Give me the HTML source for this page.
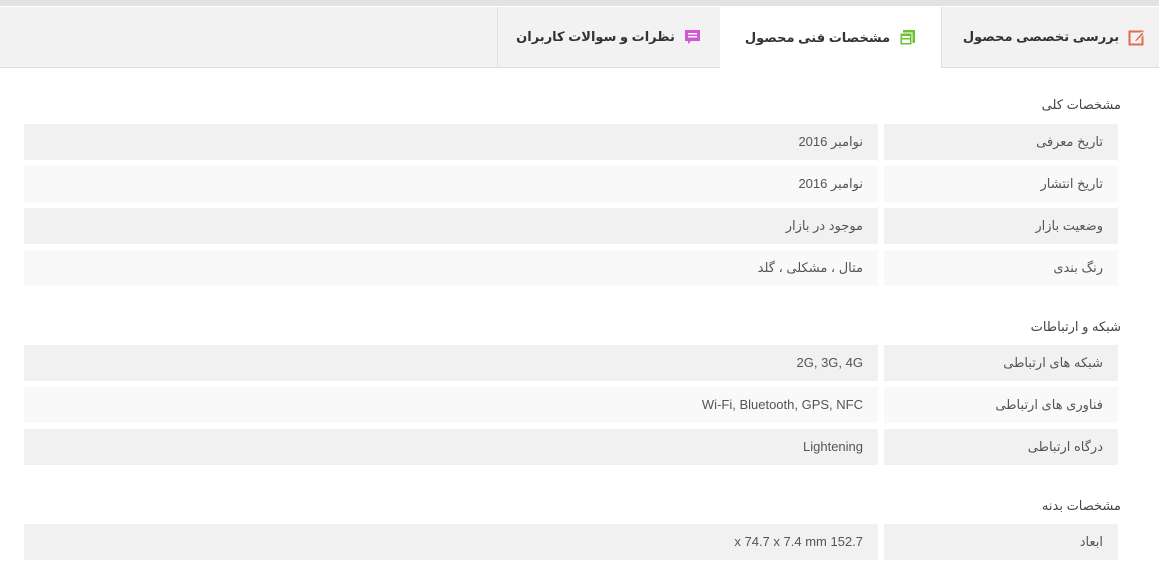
<!DOCTYPE html>
<html dir="rtl"><head><meta charset="utf-8"><style>
*{margin:0;padding:0;box-sizing:border-box}
body{width:1159px;height:562px;background:#fff;font-family:"Liberation Sans","DejaVu Sans",sans-serif;color:#444;position:relative;overflow:hidden}
.topbar{position:absolute;left:0;top:0;width:1159px;height:6px;background:#e2e2e2}
.tabs{position:absolute;left:0;top:7px;width:1159px;height:61px;background:#f2f2f2;border-bottom:1px solid #ddd}
.tab{position:absolute;top:0;height:60px;font-size:13px;font-weight:bold;color:#333;display:flex;align-items:center;justify-content:center;gap:9px;direction:rtl}
.sep{position:absolute;top:0;width:1px;height:60px;background:#e0e0e0}
.h{position:absolute;right:38px;font-size:13px;color:#444}
.l{position:absolute;left:884px;width:234px;height:36px;font-size:13px;line-height:36px;padding-right:15px;color:#555}
.v{position:absolute;left:24px;width:854px;height:36px;font-size:13px;line-height:36px;padding-right:15px;color:#555}
.d{background:#f1f1f1}.w{background:#f9f9f9}
</style></head><body>
<div class="topbar"></div>
<div class="tabs">
<div class="tab" style="left:941px;width:218px;padding-left:8px"><svg width="17" height="17" viewBox="0 0 17 17"><rect x="1.5" y="2.5" width="13" height="13" fill="none" stroke="#e36a4c" stroke-width="2"/><path d="M7 11 L14 3 L16 5 L9 12 L6.5 12.5Z" fill="#e36a4c" stroke="#fff" stroke-width="0.8"/></svg><span>بررسی تخصصی محصول</span></div>
<div class="tab" style="left:720px;width:221px;background:#fff;height:61px"><svg width="17" height="17" viewBox="0 0 17 17"><rect x="4" y="1" width="12" height="13" fill="#6ac32a"/><rect x="1" y="4" width="12" height="12" fill="#6ac32a" stroke="#fff" stroke-width="1"/><rect x="3" y="7" width="8" height="7" fill="#fff"/><rect x="3" y="9" width="8" height="1.5" fill="#6ac32a"/></svg><span>مشخصات فنی محصول</span></div>
<div class="tab" style="left:497px;width:223px"><svg width="17" height="17" viewBox="0 0 17 17"><path d="M1 1H16V12H7L4 15V12H1Z" fill="#d455d8"/><rect x="4" y="4" width="9" height="1.5" fill="#fff"/><rect x="4" y="7" width="9" height="1.5" fill="#fff"/></svg><span>نظرات و سوالات کاربران</span></div>
<div class="sep" style="left:497px"></div><div class="sep" style="left:941px"></div>
</div>
<div class="h" style="top:97px">مشخصات کلی</div>
<div class="l d" style="top:124px">تاریخ معرفی</div><div class="v d" style="top:124px">نوامبر 2016</div>
<div class="l w" style="top:166px">تاریخ انتشار</div><div class="v w" style="top:166px">نوامبر 2016</div>
<div class="l d" style="top:208px">وضعیت بازار</div><div class="v d" style="top:208px">موجود در بازار</div>
<div class="l w" style="top:250px">رنگ بندی</div><div class="v w" style="top:250px">متال ، مشکلی ، گلد</div>
<div class="h" style="top:319px">شبکه و ارتباطات</div>
<div class="l d" style="top:345px">شبکه های ارتباطی</div><div class="v d" style="top:345px">2G, 3G, 4G</div>
<div class="l w" style="top:387px">فناوری های ارتباطی</div><div class="v w" style="top:387px">Wi-Fi, Bluetooth, GPS, NFC</div>
<div class="l d" style="top:429px">درگاه ارتباطی</div><div class="v d" style="top:429px">Lightening</div>
<div class="h" style="top:498px">مشخصات بدنه</div>
<div class="l d" style="top:524px">ابعاد</div><div class="v d" style="top:524px"><span dir="ltr">x 74.7 x 7.4 mm 152.7</span></div>
</body></html>
